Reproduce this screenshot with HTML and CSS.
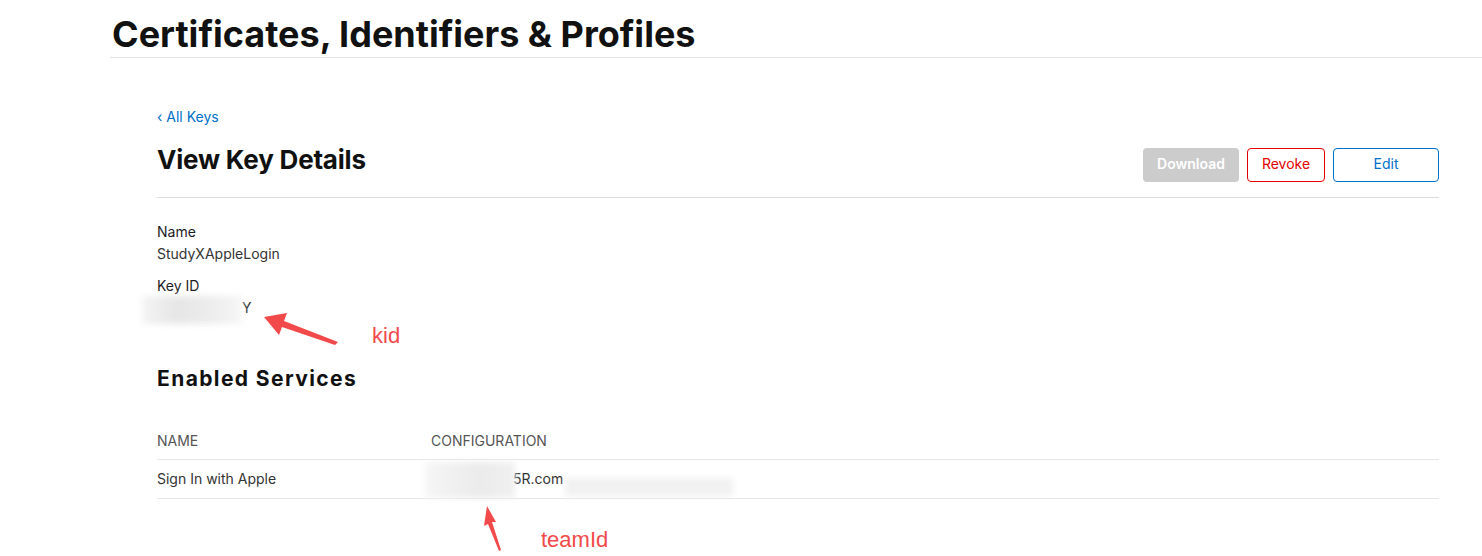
FILE: index.html
```html
<!DOCTYPE html>
<html lang="en">
<head>
<meta charset="UTF-8">
<meta name="viewport" content="width=device-width, initial-scale=1.0">
<title>View Key Details</title>
<link rel="stylesheet" href="styles.css">
</head>
<body>
  <header class="page-header">
    <h1>Certificates, Identifiers &amp; Profiles</h1>
  </header>

  <main class="key-page">
    <a class="back-link" href="#">&lsaquo; All Keys</a>
    <div class="title-row">
      <h2>View Key Details</h2>
      <div class="actions">
        <button class="btn btn-disabled" disabled>Download</button>
        <button class="btn btn-revoke">Revoke</button>
        <button class="btn btn-edit">Edit</button>
      </div>
    </div>

    <dl class="details">
      <dt>Name</dt>
      <dd>StudyXAppleLogin</dd>
      <dt>Key ID</dt>
      <dd class="key-id"><span class="hidden-part"></span>Y</dd>
    </dl>

    <h3>Enabled Services</h3>
    <table class="services">
      <thead>
        <tr><th class="col-name">NAME</th><th>CONFIGURATION</th></tr>
      </thead>
      <tbody>
        <tr><td>Sign In with Apple</td><td class="config"><span class="hidden-part"></span>5R.com</td></tr>
      </tbody>
    </table>
  </main>

  <!-- smudges and annotations drawn over the screenshot -->
  <div class="smudge smudge-kid"></div>
  <div class="smudge smudge-team"></div>
  <div class="smudge smudge-team2"></div>

  <svg class="arrow arrow-kid" width="90" height="40" viewBox="0 0 90 40">
    <polygon points="6,9 29,5 26,13 80,34 77,37 24,19 21,27" fill="#f24a4a"/>
  </svg>
  <span class="note note-kid">kid</span>

  <svg class="arrow arrow-team" width="30" height="50" viewBox="0 0 30 50">
    <polygon points="7,2 16,18 12,18 21,46 19,47 8,20 4,22" fill="#f24a4a"/>
  </svg>
  <span class="note note-team">teamId</span>
</body>
</html>
```

FILE: styles.css
```css
body {
  margin: 0;
  font-family: Inter, "Noto Sans", sans-serif;
  color: #1d1d1f;
  background: #fff;
  position: relative;
  height: 556px;
  overflow: hidden;
}

.page-header {
  margin-left: 110px;
  border-bottom: 1px solid #e3e3e3;
  height: 57px;
}

.page-header h1 {
  margin: 0;
  padding: 12px 0 0 2px;
  font-size: 36px;
  font-weight: 700;
  letter-spacing: 0;
  line-height: 44px;
  color: #111;
}

.key-page {
  padding: 50px 43px 0 157px;
}

.back-link {
  display: block;
  font-size: 14px;
  color: #0070c9;
  text-decoration: none;
  line-height: 18px;
}

.title-row {
  display: flex;
  justify-content: space-between;
  align-items: flex-start;
  border-bottom: 1px solid #dcdcdc;
  padding: 13px 0 15px;
}

.title-row h2 {
  margin: 6px 0 0;
  font-size: 26px;
  font-weight: 700;
  line-height: 30px;
  color: #111;
  letter-spacing: -0.2px;
}

.actions {
  display: flex;
  gap: 8px;
  padding-top: 9px;
}

.btn {
  height: 34px;
  border-radius: 4px;
  font-family: inherit;
  font-size: 14px;
  line-height: 30px;
  background: #fff;
  padding: 0 0 2px;
}

.btn-disabled {
  width: 96px;
  background: #cccccc;
  border: none;
  color: #fff;
  font-weight: 600;
}

.btn-revoke {
  width: 78px;
  border: 1px solid #e30000;
  color: #e30000;
}

.btn-edit {
  width: 106px;
  border: 1px solid #0070c9;
  color: #0070c9;
}

.details {
  margin: 25px 0 0;
}

.details dt {
  font-size: 14px;
  font-weight: 400;
  line-height: 18px;
  color: #1d1d1f;
}

.details dd {
  margin: 4px 0 14px;
  font-size: 14px;
  line-height: 18px;
  color: #333;
}

.hidden-part {
  display: inline-block;
}

.key-id .hidden-part {
  width: 100px;
  margin-left: -15px;
}

h3 {
  margin: 49px 0 0;
  font-size: 21px;
  font-weight: 700;
  letter-spacing: 1.4px;
  line-height: 26px;
  color: #111;
}

.services {
  width: 100%;
  border-collapse: collapse;
  margin-top: 40px;
  font-size: 14px;
}

.services th {
  text-align: left;
  font-weight: 400;
  font-size: 14px;
  color: #555;
  padding: 0 0 10px;
  border-bottom: 1px solid #e6e6e6;
}

.services .col-name {
  width: 274px;
}

.services td {
  padding: 10px 0 11px;
  color: #333;
  border-bottom: 1px solid #e6e6e6;
}

.config .hidden-part {
  width: 82px;
}

.smudge {
  position: absolute;
  filter: blur(3px);
}

.smudge-kid {
  left: 142px;
  top: 296px;
  width: 100px;
  height: 28px;
  background: linear-gradient(90deg, #f4f4f4 0%, #e6e6e6 35%, #ededed 70%, #f6f6f6 100%);
}

.smudge-team {
  left: 425px;
  top: 462px;
  width: 90px;
  height: 36px;
  background: linear-gradient(90deg, #f6f6f6, #ebebeb 60%, #f0f0f0);
}

.smudge-team2 {
  left: 565px;
  top: 478px;
  width: 168px;
  height: 18px;
  background: #f1f1f1;
}

.arrow {
  position: absolute;
}

.arrow-kid {
  left: 258px;
  top: 308px;
}

.arrow-team {
  left: 480px;
  top: 504px;
}

.note {
  position: absolute;
  font-family: "Liberation Sans", Arial, sans-serif;
  font-size: 22px;
  color: #f24a4a;
}

.note-kid {
  left: 372px;
  top: 323px;
}

.note-team {
  left: 541px;
  top: 527px;
}
```
